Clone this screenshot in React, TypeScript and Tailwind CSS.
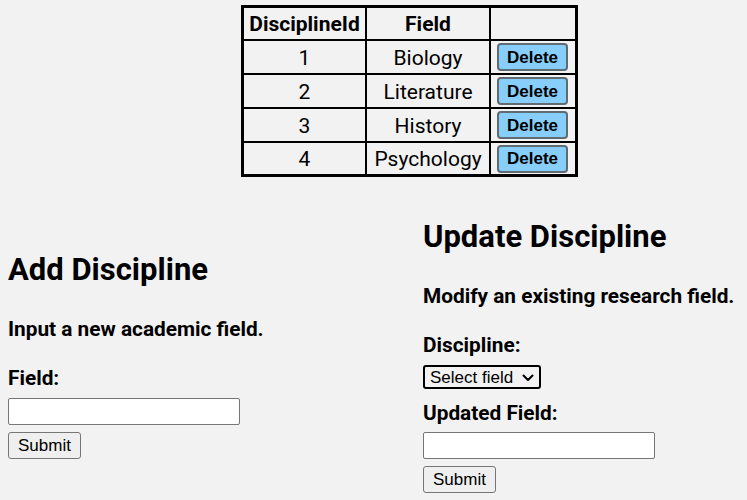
import React from "react";

const rows = [
  { id: 1, field: "Biology" },
  { id: 2, field: "Literature" },
  { id: 3, field: "History" },
  { id: 4, field: "Psychology" },
];

function Chevron() {
  return (
    <svg width="12" height="8" viewBox="0 0 12 8" className="pointer-events-none absolute right-[7px] top-[9px]">
      <path d="M1.5 1.5 L6 6 L10.5 1.5" fill="none" stroke="#000" strokeWidth="2" strokeLinecap="round" strokeLinejoin="round" />
    </svg>
  );
}

export default function App() {
  const last = rows.length - 1;
  return (
    <div className="min-h-screen bg-[#f2f2f2] pt-[5px] font-['Roboto',sans-serif] text-black">
      <table className="ml-[241px] border-separate border-spacing-0 text-[21px]">
        <thead>
          <tr>
            <th className="border-l-[3px] border-t-[3px] border-r-2 border-b-2 border-black p-0 font-bold">
              <div className="flex h-[31px] w-[121px] items-center justify-center pt-[3px]">DisciplineId</div>
            </th>
            <th className="border-t-[3px] border-r-2 border-b-2 border-black p-0 font-bold">
              <div className="flex h-[31px] w-[122px] items-center justify-center pt-[3px]">Field</div>
            </th>
            <th className="border-t-[3px] border-r-[3px] border-b-2 border-black p-0">
              <div className="h-[31px] w-[84px]"></div>
            </th>
          </tr>
        </thead>
        <tbody>
          {rows.map((r, i) => (
            <tr key={r.id}>
              <td className={`border-l-[3px] border-r-2 border-black p-0 ${i === last ? "border-b-[3px]" : "border-b-2"}`}>
                <div className={`flex w-[121px] items-center justify-center pt-[3px] ${i === last ? "h-[31px]" : "h-[32px]"}`}>{r.id}</div>
              </td>
              <td className={`border-r-2 border-black p-0 ${i === last ? "border-b-[3px]" : "border-b-2"}`}>
                <div className={`flex w-[122px] items-center justify-center pt-[3px] ${i === last ? "h-[31px]" : "h-[32px]"}`}>{r.field}</div>
              </td>
              <td className={`border-r-[3px] border-black p-0 ${i === last ? "border-b-[3px]" : "border-b-2"}`}>
                <div className={`flex w-[84px] items-center justify-center pr-[1px] ${i === last ? "h-[31px]" : "h-[32px]"}`}>
                  <button className="flex h-[28px] w-[71px] items-center justify-center rounded-[4px] border-2 border-[#5f6b73] bg-[#87cefa] font-['Liberation_Sans',Arial,sans-serif] text-[17px] font-bold leading-none">
                    Delete
                  </button>
                </div>
              </td>
            </tr>
          ))}
        </tbody>
      </table>

      <div className="mt-[41px] flex items-center justify-between pl-[8px] pr-[8px]">
        <div className="flex flex-col items-start">
          <h1 className="mb-[28px] text-[31px] font-bold leading-[38px]">Add Discipline</h1>
          <p className="mb-[25px] text-[20.8px] font-bold leading-[24px]">Input a new academic field.</p>
          <label className="mb-[8px] text-[20.8px] font-bold leading-[24px]">Field:</label>
          <input type="text" className="h-[27px] w-[232px] rounded-[2px] border border-[#767676] bg-white px-1 text-[17px]" />
          <button className="mt-[7px] h-[27px] w-[73px] rounded-[3px] border border-[#767676] bg-[#efefef] font-['Liberation_Sans',Arial,sans-serif] text-[17px] leading-none">
            Submit
          </button>
        </div>

        <div className="flex w-[316px] flex-col items-start">
          <h1 className="mb-[28px] text-[31px] font-bold leading-[38px]">Update Discipline</h1>
          <p className="mb-[25px] text-[20.8px] font-bold leading-[24px]">Modify an existing research field.</p>
          <label className="mb-[8px] text-[20.8px] font-bold leading-[24px]">Discipline:</label>
          <div className="relative">
            <select className="h-[24px] w-[118px] appearance-none rounded-[3px] border-2 border-black bg-transparent pl-[5px] font-['Liberation_Sans',Arial,sans-serif] text-[17px] leading-none">
              <option>Select field</option>
            </select>
            <Chevron />
          </div>
          <label className="mt-[11px] mb-[7px] text-[20.8px] font-bold leading-[24px]">Updated Field:</label>
          <input type="text" className="h-[27px] w-[232px] rounded-[2px] border border-[#767676] bg-white px-1 text-[17px]" />
          <button className="mt-[7px] h-[27px] w-[73px] rounded-[3px] border border-[#767676] bg-[#efefef] font-['Liberation_Sans',Arial,sans-serif] text-[17px] leading-none">
            Submit
          </button>
        </div>
      </div>
    </div>
  );
}
